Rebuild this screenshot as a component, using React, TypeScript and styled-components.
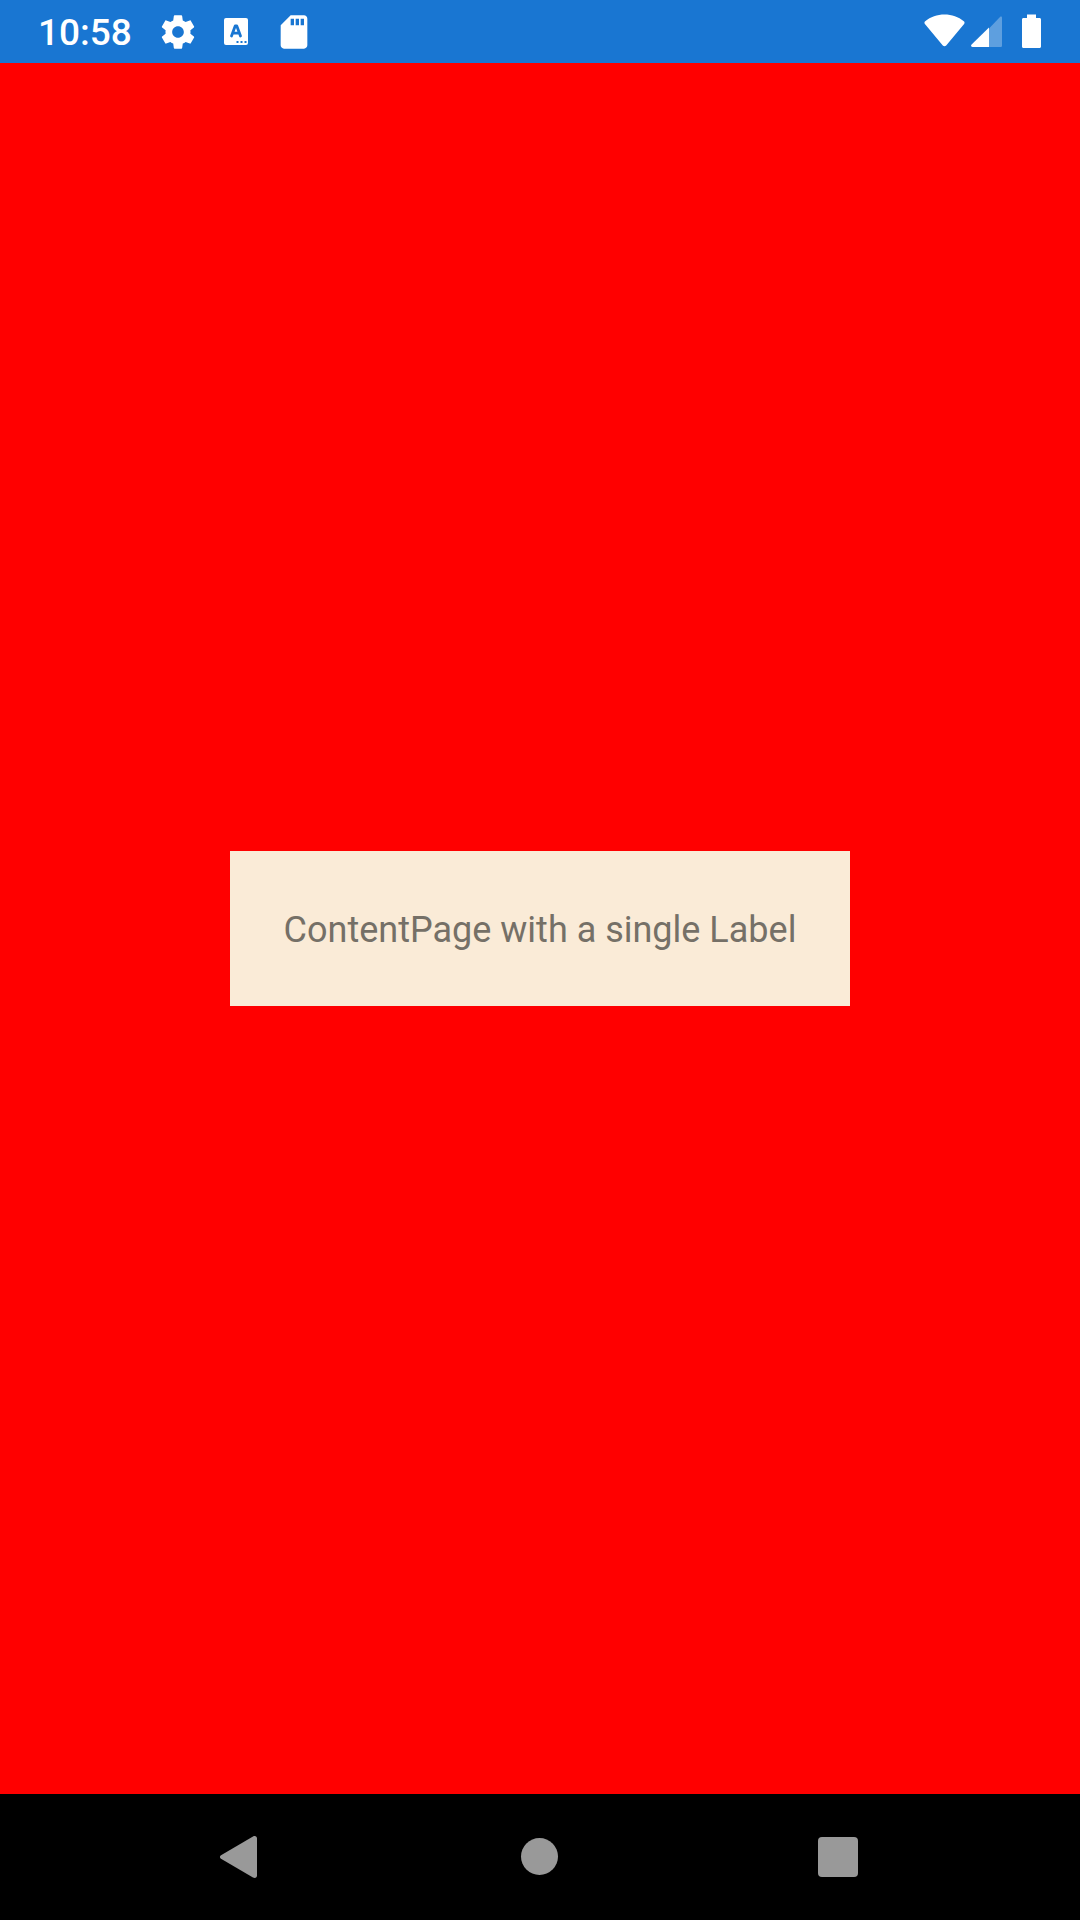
import React from "react";
import styled, { createGlobalStyle } from "styled-components";

const GlobalStyle = createGlobalStyle`
  * {
    box-sizing: border-box;
  }
  body {
    margin: 0;
    font-family: Roboto, "Noto Sans", sans-serif;
  }
`;

const Screen = styled.div`
  display: flex;
  flex-direction: column;
  min-height: 100vh;
  background: #ff0000;
`;

const StatusBar = styled.header`
  display: flex;
  align-items: center;
  justify-content: space-between;
  height: 63px;
  padding: 0 34px 0 38px;
  background: #1976d2;
  color: #ffffff;
`;

const StatusGroup = styled.div<{ $gap: number }>`
  display: flex;
  align-items: center;
  gap: ${({ $gap }) => $gap}px;
`;

const Clock = styled.time`
  margin-right: 8px;
  padding-top: 2px;
  font-size: 37px;
  font-weight: 500;
  line-height: 44px;
`;

const StatusIcon = styled.svg<{ $width?: number }>`
  display: block;
  width: ${({ $width = 40 }) => $width}px;
  height: 40px;
  fill: currentColor;
`;

const Page = styled.main`
  display: flex;
  flex: 1;
  align-items: center;
  justify-content: center;
`;

const Label = styled.p`
  margin: 0;
  padding: 55px 54px 51px;
  background: #faebd7;
  color: #757067;
  font-size: 36px;
  line-height: 49px;
`;

const NavBar = styled.nav`
  display: grid;
  grid-template-columns: repeat(3, 1fr);
  height: 126px;
  padding: 0 93px;
  background: #000000;
`;

const NavButton = styled.button`
  display: flex;
  align-items: center;
  justify-content: center;
  padding: 0;
  border: 0;
  background: transparent;
  color: #999999;
  cursor: pointer;
`;

const NavIcon = styled.svg`
  display: block;
  width: 74px;
  height: 74px;
  fill: currentColor;
`;

export default function App() {
  return (
    <Screen>
      <GlobalStyle />
      <StatusBar>
        <StatusGroup $gap={18}>
          <Clock>10:58</Clock>
          <StatusIcon viewBox="0 0 24 24" aria-hidden="true">
            <path d="M19.43 12.98c.04-.32.07-.64.07-.98s-.03-.66-.07-.98l2.11-1.65c.19-.15.24-.42.12-.64l-2-3.46c-.12-.22-.39-.3-.61-.22l-2.49 1c-.52-.4-1.08-.73-1.69-.98l-.38-2.65C14.46 2.18 14.25 2 14 2h-4c-.25 0-.46.18-.49.42l-.38 2.65c-.61.25-1.17.59-1.69.98l-2.49-1c-.23-.09-.49 0-.61.22l-2 3.46c-.13.22-.07.49.12.64l2.11 1.65c-.04.32-.07.65-.07.98s.03.66.07.98l-2.11 1.65c-.19.15-.24.42-.12.64l2 3.46c.12.22.39.3.61.22l2.49-1c.52.4 1.08.73 1.69.98l.38 2.65c.03.24.24.42.49.42h4c.25 0 .46-.18.49-.42l.38-2.65c.61-.25 1.17-.59 1.69-.98l2.49 1c.23.09.49 0 .61-.22l2-3.46c.12-.22.07-.49-.12-.64l-2.11-1.65zM12 15.5c-1.93 0-3.500-1.570-3.500-3.500s1.570-3.500 3.500-3.500 3.500 1.570 3.500 3.500-1.570 3.500-3.500 3.500z" />
          </StatusIcon>
          <StatusIcon viewBox="0 0 40 40" aria-hidden="true">
            <rect x="8" y="6" width="24" height="27" rx="2" />
            <path
              d="M15.5 24 19.2 14h1.6L24.5 24M17 21.2h6"
              fill="none"
              stroke="#1976d2"
              strokeWidth="2.8"
              strokeLinecap="round"
              strokeLinejoin="round"
            />
            <path d="M20.5 29h2v2h-2zM24.5 29h2v2h-2zM28.5 29h2v2h-2z" fill="#1976d2" />
          </StatusIcon>
          <StatusIcon viewBox="0 0 24 24" aria-hidden="true">
            <path d="M18 2h-8L4.02 8 4 20c0 1.1.9 2 2 2h12c1.1 0 2-.9 2-2V4c0-1.1-.9-2-2-2zm-6 6h-2V4h2v4zm3 0h-2V4h2v4zm3 0h-2V4h2v4z" />
          </StatusIcon>
        </StatusGroup>
        <StatusGroup $gap={6}>
          <StatusIcon $width={41} viewBox="0 0 41 40" aria-hidden="true">
            <path d="M1.2 9.2C6.5 4.9 13.2 2.5 20.5 2.5s14 2.4 19.3 6.7c.9.7 1 1.8.3 2.7L22.2 33.4c-.9 1.1-2.5 1.1-3.4 0L.9 11.9C.2 11 .3 9.9 1.2 9.2z" />
          </StatusIcon>
          <StatusIcon $width={31} viewBox="0 0 31 40" aria-hidden="true">
            <path
              d="M18 16.500 29 4.900c1-.9 2-.5 2 .8V33.500c0 1-.6 1.500-1.500 1.500H18z"
              fillOpacity="0.3"
            />
            <path d="M18 15.500V35H1.500C0 35-.4 33.600.6 32.600z" />
          </StatusIcon>
          <StatusIcon $width={38} viewBox="0 0 38 40" aria-hidden="true">
            <path d="M19 2.500h9V6h3.500c.9 0 1.500.6 1.500 1.500v27c0 .9-.6 1.500-1.500 1.500h-16c-.9 0-1.500-.6-1.500-1.500v-27c0-.9.6-1.500 1.500-1.500H19z" />
          </StatusIcon>
        </StatusGroup>
      </StatusBar>
      <Page>
        <Label>ContentPage with a single Label</Label>
      </Page>
      <NavBar aria-label="System navigation">
        <NavButton type="button" aria-label="Back">
          <NavIcon viewBox="0 0 74 74" aria-hidden="true">
            <path d="M16 35.300 48 16.500c2-1.100 4-.3 4 2v37c0 2.300-2 3.100-4 2L16 38.700c-1.400-.9-1.400-2.500 0-3.400z" />
          </NavIcon>
        </NavButton>
        <NavButton type="button" aria-label="Home">
          <NavIcon viewBox="0 0 74 74" aria-hidden="true">
            <circle cx="36.500" cy="36.500" r="18.500" />
          </NavIcon>
        </NavButton>
        <NavButton type="button" aria-label="Recent apps">
          <NavIcon viewBox="0 0 74 74" aria-hidden="true">
            <rect x="17" y="17" width="40" height="40" rx="4" />
          </NavIcon>
        </NavButton>
      </NavBar>
    </Screen>
  );
}
